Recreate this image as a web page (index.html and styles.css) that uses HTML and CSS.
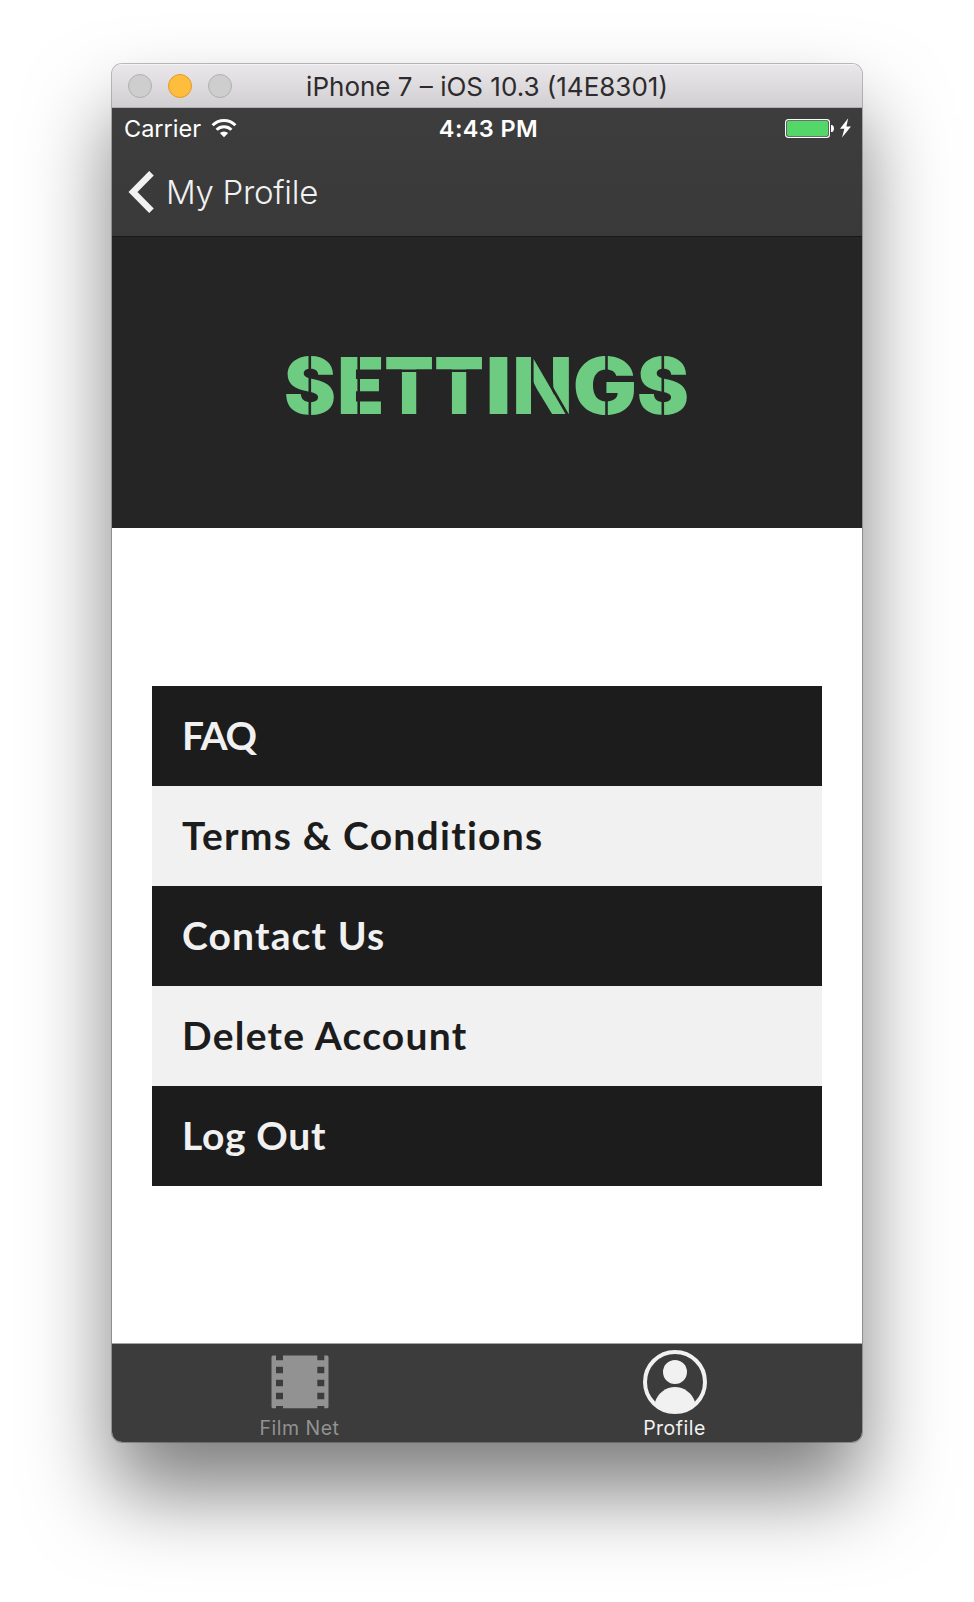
FILE: index.html
```html
<!DOCTYPE html>
<html lang="en">
<head>
<meta charset="utf-8">
<title>Settings</title>
<link rel="stylesheet" href="styles.css">
</head>
<body>
<div class="window">
  <div class="titlebar">
    <div class="lights"><span class="light"></span><span class="light amber"></span><span class="light"></span></div>
    <span class="title">iPhone 7 – iOS 10.3 (14E8301)</span>
  </div>
  <header class="nav">
    <div class="status">
      <div class="status-left">
        <span class="carrier">Carrier</span>
        <svg width="26" height="19" viewBox="0 0 26 19"><g fill="none" stroke="#fff" stroke-width="3"><path d="M1.6 6.2A16.2 16.2 0 0 1 24.4 6.2"/><path d="M5.6 10.700A10.6 10.6 0 0 1 20.4 10.700"/></g><path fill="#fff" d="M8.8 14.1Q13 10.7 17.2 14.1L13 18.3z"/></svg>
      </div>
      <span class="time">4:43 PM</span>
      <svg class="battery" width="68" height="22" viewBox="0 0 68 22"><rect x=".6" y="2.6" width="43.8" height="17.8" rx="2.6" fill="none" stroke="#fff" stroke-width="1.2"/><rect x="2" y="4" width="41" height="15" rx="1.4" fill="#53d769"/><path fill="#fff" d="M46 8h1.2q1.8.8 1.8 3.5t-1.8 3.5H46z"/><path fill="#fff" d="M63.2 1.2 55 11.8h4.4L57 20.4l9-11h-4.600z"/></svg>
    </div>
    <div class="back">
      <svg width="27" height="42" viewBox="0 0 27 42"><path fill="none" stroke="#f1f1f1" stroke-width="6.400" d="M23.500 2.200 5 21l18.500 18.800"/></svg>
      <span>My Profile</span>
    </div>
  </header>
  <section class="hero">
    <svg class="heading" width="420" height="110" viewBox="278 330 420 110">
      <text class="heading-text" y="414"><tspan x="285" textLength="52" lengthAdjust="spacingAndGlyphs">S</tspan><tspan x="338.300" textLength="47" lengthAdjust="spacingAndGlyphs">E</tspan><tspan x="385.300" textLength="49.700" lengthAdjust="spacingAndGlyphs">T</tspan><tspan x="435.200" textLength="49.700" lengthAdjust="spacingAndGlyphs">T</tspan><tspan x="486.500" textLength="26" lengthAdjust="spacingAndGlyphs">I</tspan><tspan x="513.500" textLength="60" lengthAdjust="spacingAndGlyphs">N</tspan><tspan x="573.700" textLength="64.300" lengthAdjust="spacingAndGlyphs">G</tspan><tspan x="638" textLength="52" lengthAdjust="spacingAndGlyphs">S</tspan></text>
      <g fill="none" stroke="#252525" stroke-width="2.600">
        <path d="M310.800 354v64M359.700 354v64M384 370.800h101M607.500 354v28M607.500 396v22M607.500 379.300h31M663.800 354v64M533.300 354v64M533.300 354l36 62"/>
      </g>
    </svg>
  </section>
  <main class="content">
    <ul class="menu">
      <li class="faq">FAQ</li>
      <li class="terms">Terms &amp; Conditions</li>
      <li class="contact">Contact Us</li>
      <li class="delete">Delete Account</li>
      <li class="logout">Log Out</li>
    </ul>
  </main>
  <footer class="tabs">
    <div class="tab">
      <svg width="64" height="64" viewBox="0 0 64 64"><path fill="#929292" fill-rule="evenodd" d="M5 5.500h3v4.800h7V5.500h34.300v4.800h7V5.500H59q1.500 0 1.500 1.500v49.800q0 1.500-1.500 1.500h-2.700V56h-7v2.300H15V56H8v2.300H5q-1.500 0-1.500-1.500V7Q3.500 5.500 5 5.500zM8 16.700v6.600h7v-6.600zm0 13v6.600h7v-6.600zm0 13v6.600h7v-6.600zm41.300-26v6.600h7v-6.600zm0 13v6.600h7v-6.600zm0 13v6.600h7v-6.600z"/></svg>
      <span>Film Net</span>
    </div>
    <div class="tab active">
      <svg width="64" height="64" viewBox="0 0 64 64"><circle cx="32" cy="32" r="30" fill="none" stroke="#f1f1f1" stroke-width="4"/><circle cx="32" cy="22" r="12" fill="#f1f1f1"/><path fill="#f1f1f1" d="M12 52C15 43 23 37 32 37s17 6 20 15Q43 62 32 62T12 52z"/></svg>
      <span>Profile</span>
    </div>
  </footer>
</div>
</body>
</html>
```
FILE: styles.css
```css
* { box-sizing: border-box; }
body { margin: 0; padding: 64px 112px 160px; background: #fff; font-family: Inter, "Liberation Sans", sans-serif; }
svg { display: block; flex: none; }
.window { width: 750px; height: 1378px; display: flex; flex-direction: column; overflow: hidden; border-radius: 10px; box-shadow: 0 0 0 1px rgba(0,0,0,.25), 0 50px 84px rgba(0,0,0,.51); }
.titlebar { height: 44px; display: grid; grid-template-columns: 150px 1fr 150px; align-items: center; background: linear-gradient(#e9e7e9, #d1cfd1); border-top: 1px solid #f5f4f5; border-bottom: 1px solid #b1afb1; }
.lights { display: flex; gap: 16px; padding-left: 16px; }
.light { width: 24px; height: 24px; border-radius: 50%; background: #cfcecf; border: 1px solid #b0afb0; }
.amber { background: #ffbd3e; border-color: #e19a29; }
.title { text-align: center; font-size: 26px; color: #2d2b2d; white-space: nowrap; }
.nav { height: 129px; background: linear-gradient(#3d3d3d, #393939); border-bottom: 1px solid #181818; color: #fff; }
.status { height: 40px; display: grid; grid-template-columns: 1fr auto 1fr; align-items: center; padding: 0 9px 0 12px; font-size: 23.500px; }
.status-left { display: flex; align-items: center; gap: 10px; }
.time { font-weight: 600; letter-spacing: .4px; }
.battery { justify-self: end; }
.back { height: 88px; display: flex; align-items: center; gap: 11px; padding: 0 0 1px 16px; font-size: 33px; font-weight: 350; letter-spacing: -.3px; color: #f1f1f1; }
.hero { height: 291px; background: #252525; display: flex; justify-content: center; padding-top: 93px; }
.heading-text { font: 900 79px Inter, sans-serif; fill: #6ecb82; }
.content { height: 816px; padding: 158px 40px 0; background: #fff; border-bottom: 1px solid #a4a4a4; }
.menu { list-style: none; margin: 0; padding: 0; font: 700 39px/99px Lato, sans-serif; }
.menu li { height: 100px; padding-left: 30px; background: #1c1c1c; color: #f1f1f1; }
.menu li:nth-child(even) { background: #f1f1f1; color: #1c1c1c; }
.faq { letter-spacing: -1.300px; }
.terms { letter-spacing: 1.250px; }
.contact { letter-spacing: 1.150px; }
.delete { letter-spacing: 1.250px; }
.logout { letter-spacing: .7px; }
.tabs { height: 98px; display: flex; justify-content: space-around; background: #3c3c3c; color: #929292; }
.tab { width: 374px; display: flex; flex-direction: column; align-items: center; padding-top: 6px; font-size: 19.500px; line-height: 28px; letter-spacing: .5px; }
.active { color: #f1f1f1; }
```
